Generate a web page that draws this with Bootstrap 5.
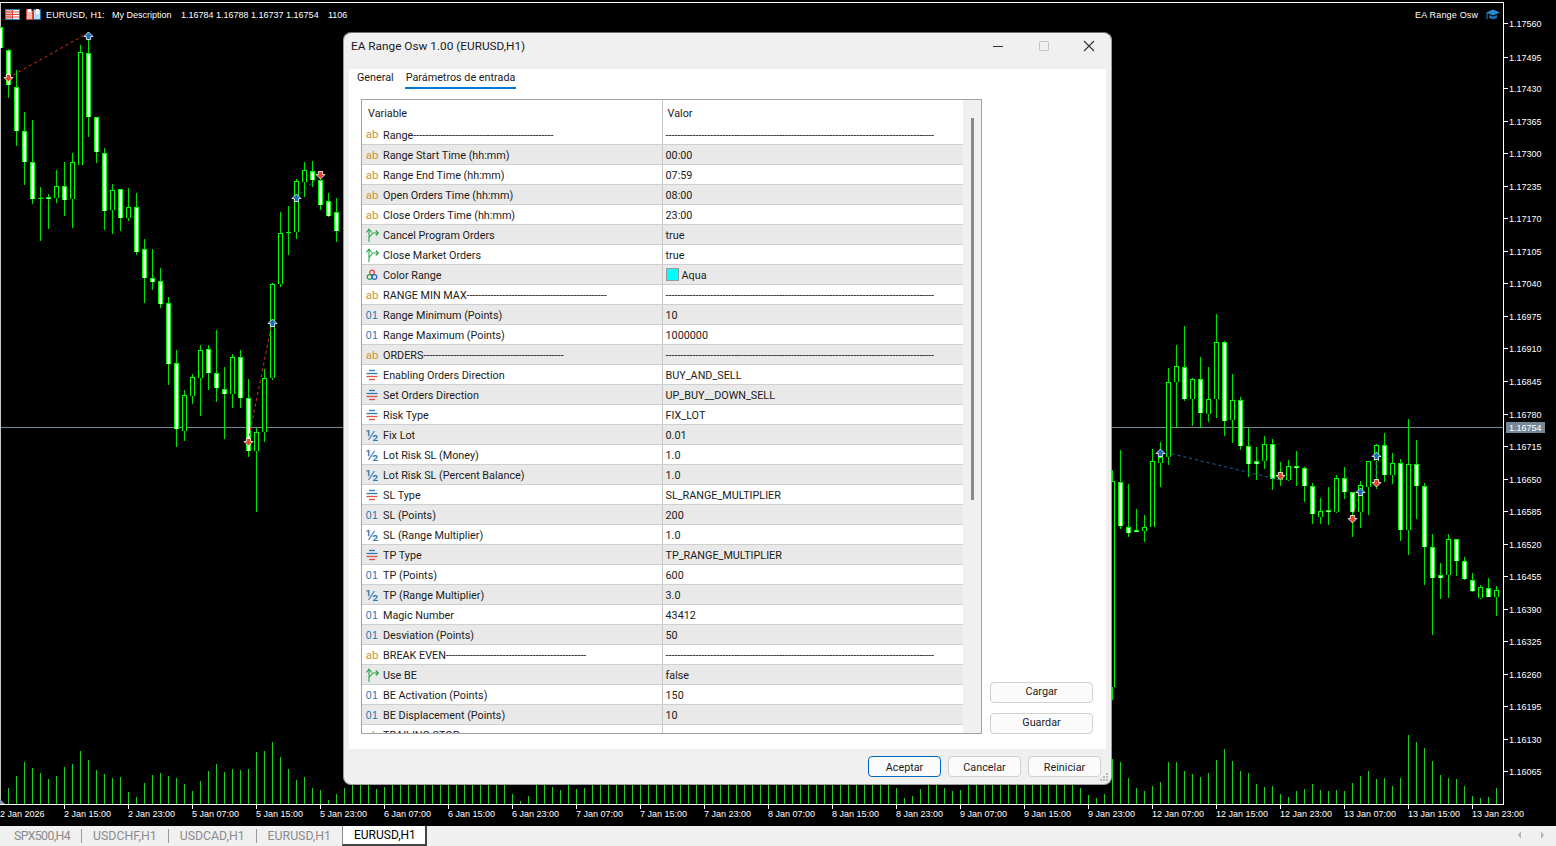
<!DOCTYPE html>
<html lang="es">
<head>
<meta charset="UTF-8">
<title>EA Range Osw 1.00 (EURUSD,H1)</title>
<link href="https://cdn.jsdelivr.net/npm/bootstrap@5.3.0/dist/css/bootstrap.min.css" rel="stylesheet">
<style>
    html, body { height: 100%; overflow: hidden; background: #000; }
    .term { height: 846px; font-family: "Roboto", "Liberation Sans", sans-serif; font-size: 10.8px; }
    .chart-pane { height: 826px; background: #000; }
    .chart-svg { display: block; }
    .chart-svg text { font-family: "Liberation Sans", sans-serif; font-size: 9px; fill: #fff; }
    .chart-svg text.hdr-text { letter-spacing: .02em; }
    .tab-strip { height: 20px; background: #f0f0f0; padding-left: 3px; }
    .sym-tab { color: #8b8b8b; font-size: 12.3px; line-height: 20px; padding: 0 11px; }
    .sym-tab-tight { letter-spacing: -.6px; }
    .sym-sep { width: 1px; height: 14px; background: #9a9a9a; }
    .sym-on { color: #000; background: #fff; border: 1px solid #8d8d8d; border-right: 2px solid #444; border-bottom: 2px solid #444; padding: 0 9px 0 11px; height: 21px; line-height: 18px; margin-top: -1px; font-size: 12px; }
    .strip-arrows { right: 10px; top: 831px; }

    .ea-dialog { left: 343px; top: 32px; width: 769px; height: 753px; background: #f0f0f0; border: 1px solid #9c9c9c; border-top-color: #6e6e6e; border-radius: 8px; color: #1b1b1b; }
    .dlg-title { height: 36px; padding: 0 0 9px 7px; font-size: 11.8px; }
    .dlg-caption { margin-top: 2px; }
    .win-btns { margin-right: -1px; }
    .win-btn { width: 45.5px; display: flex; justify-content: center; }
    .dlg-body { background: #fff; margin: 0 5px; height: 680px; }
    .tab-row { height: 30px; padding: 0 7px; gap: 10px; }
    .cfg-tab { line-height: 18px; padding: 0 1px; color: #1b1b1b; }
    .cfg-tab-on { border-bottom: 2px solid #0078d4; height: 20px; }
    .grid-row { padding: 0 12px 15px 12px; }
    .grid-box { width: 621px; height: 635px; border: 1px solid #a0a0aa; overflow: hidden; }
    .scroll-rail { width: 18px; background: #f0f0f0; }
    .scroll-thumb { width: 3px; height: 382px; margin: 18px auto 0; background: #8a8a8a; }
    .prm-grid { width: 601px; table-layout: fixed; margin: 0; font-size: 10.8px; --bs-table-bg: transparent; }
    .prm-grid th, .prm-grid td { height: 20px; padding: 3px 0 0 3px; line-height: 16px; font-weight: 400; white-space: nowrap; overflow: hidden; border: 0; border-bottom: 1px solid #cfcfcf; color: #1b1b1b; vertical-align: middle; }
    .prm-grid th { height: 25px; border-bottom: 0; padding-left: 6px; }
    .prm-grid td:first-child { padding-left: 3px; }
    .prm-grid td + td, .prm-grid th + th { border-left: 1px solid #c8c8c8; }
    .prm-grid th + th { padding-left: 5px; }
    .prm-grid tbody tr:nth-child(even) td { background: #e9e9e9; }
    .var-col { width: 300px; }
    .ico { display: inline-block; width: 14px; margin-right: 4px; margin-top: -3px; text-align: center; vertical-align: middle; line-height: 14px; }
    .ico-ab { color: #c8953b; font-size: 11.5px; }
    .ico-int { color: #1f74b5; font-family: "Liberation Sans", sans-serif; font-size: 10.5px; letter-spacing: .4px; }
    .ico-dbl { color: #2a7cb8; font-size: 17px; }
    .swatch { display: inline-block; width: 13px; height: 13px; background: #0ff; border: 1px solid #9a9a9a; margin-right: 3px; vertical-align: -2px; }
    .side-col { width: 103px; margin-left: 8px; gap: 10px; }
    .win-btn-std { --bs-btn-padding-y: 0; --bs-btn-padding-x: 0; --bs-btn-font-size: 10.8px; --bs-btn-border-radius: 4px; --bs-btn-bg: #fbfbfb; --bs-btn-border-color: #d0d0d0; --bs-btn-color: #1b1b1b; height: 21px; line-height: 18px; }
    .win-btn-main { --bs-btn-border-color: #0067c0; }
    .dlg-foot { height: 36px; padding: 7px 10px 0 0; gap: 7px; }
    .dlg-foot .win-btn-std { width: 73px; padding-top: 2px; }
    .grip { right: 2px; bottom: 2px; }
</style>
</head>
<body>
<svg width="0" height="0" class="position-absolute">
    <symbol id="i-bool" viewBox="0 0 14 14"><g fill="none" stroke="#2aa84a" stroke-width="1.1"><path d="M4 14V1.5M1.2 4.5 4 1.2l2.8 3.3"/><path d="M4 9.5 8 5h5.4M10.8 2.5 13.4 5l-2.6 2.5"/></g></symbol>
    <symbol id="i-enum" viewBox="0 0 14 14"><g stroke-width="1.3"><path d="M4 2.5h6" stroke="#2a7cb8"/><path d="M1.5 5.5h11" stroke="#2a7cb8"/><path d="M1.5 8.5h11" stroke="#e0503c"/><path d="M4 11.5h6" stroke="#e0503c"/></g></symbol>
    <symbol id="i-color" viewBox="0 0 14 14"><g fill="none" stroke-width="1.3"><circle cx="7" cy="4.5" r="2.3" stroke="#d8483c"/><circle cx="4.5" cy="9" r="2.3" stroke="#2f9e55"/><circle cx="9.5" cy="9" r="2.3" stroke="#2a6cb8"/></g></symbol>
</svg>

<div class="term d-flex flex-column position-relative">
    <div class="chart-pane position-relative">
        <svg id="chart" class="chart-svg" width="1556" height="826"></svg>
    </div>

    <div class="tab-strip d-flex align-items-center">
        <span class="sym-tab sym-tab-tight">SPX500,H4</span><span class="sym-sep"></span>
        <span class="sym-tab">USDCHF,H1</span><span class="sym-sep"></span>
        <span class="sym-tab">USDCAD,H1</span><span class="sym-sep"></span>
        <span class="sym-tab">EURUSD,H1</span>
        <span class="sym-on">EURUSD,H1</span>
    </div>
    <svg class="strip-arrows position-absolute" width="28" height="8"><path d="M3 0v8L0 4z" fill="#b5b5b5"/><path d="M23 0v8l3-4z" fill="#b5b5b5"/></svg>

    <div class="ea-dialog position-absolute d-flex flex-column">
        <div class="dlg-title d-flex align-items-center justify-content-between">
            <span class="dlg-caption">EA Range Osw 1.00 (EURUSD,H1)</span>
            <div class="win-btns d-flex align-items-center">
                <span class="win-btn"><svg width="12" height="12"><path d="M1 6.5h10" stroke="#333" stroke-width="1"/></svg></span>
                <span class="win-btn"><svg width="12" height="12"><rect x="1.5" y="1.5" width="9" height="9" fill="none" stroke="#c4c4c4" rx="1"/></svg></span>
                <span class="win-btn"><svg width="12" height="12"><path d="M1 1l10 10M11 1 1 11" stroke="#333" stroke-width="1.1"/></svg></span>
            </div>
        </div>

        <div class="dlg-body d-flex flex-column">
            <div class="tab-row d-flex align-items-start">
                <span class="cfg-tab">General</span>
                <span class="cfg-tab cfg-tab-on">Parámetros de entrada</span>
            </div>
            <div class="grid-row d-flex flex-grow-1">
                <div class="grid-box d-flex">
                    <table class="prm-grid table">
                        <colgroup><col class="var-col"><col></colgroup>
                        <thead><tr><th>Variable</th><th>Valor</th></tr></thead>
                        <tbody id="rows"></tbody>
                    </table>
                    <div class="scroll-rail"><div class="scroll-thumb"></div></div>
                </div>
                <div class="side-col d-flex flex-column justify-content-end">
                    <button class="btn win-btn-std">Cargar</button>
                    <button class="btn win-btn-std">Guardar</button>
                </div>
            </div>
        </div>

        <div class="dlg-foot d-flex justify-content-end">
            <button class="btn win-btn-std win-btn-main">Aceptar</button>
            <button class="btn win-btn-std">Cancelar</button>
            <button class="btn win-btn-std">Reiniciar</button>
        </div>
        <svg class="grip position-absolute" width="9" height="9"><g fill="#b9b9b9"><rect x="6" width="2" height="2"/><rect x="3" y="3" width="2" height="2"/><rect x="6" y="3" width="2" height="2"/><rect y="6" width="2" height="2"/><rect x="3" y="6" width="2" height="2"/><rect x="6" y="6" width="2" height="2"/></g></svg>
    </div>
</div>

<script src="https://cdn.jsdelivr.net/npm/bootstrap@5.3.0/dist/js/bootstrap.bundle.min.js"></script>
<script>
    // parametros del EA: [tipo, nombre, valor]
    const dash = '-'.repeat(90);
    const sep = '-'.repeat(47);
    const params = [
        ['ab', 'Range' + sep, dash],
        ['ab', 'Range Start Time (hh:mm)', '00:00'],
        ['ab', 'Range End Time (hh:mm)', '07:59'],
        ['ab', 'Open Orders Time (hh:mm)', '08:00'],
        ['ab', 'Close Orders Time (hh:mm)', '23:00'],
        ['bool', 'Cancel Program Orders', 'true'],
        ['bool', 'Close Market Orders', 'true'],
        ['color', 'Color Range', 'Aqua'],
        ['ab', 'RANGE MIN MAX' + sep, dash],
        ['int', 'Range Minimum (Points)', '10'],
        ['int', 'Range Maximum (Points)', '1000000'],
        ['ab', 'ORDERS' + sep, dash],
        ['enum', 'Enabling Orders Direction', 'BUY_AND_SELL'],
        ['enum', 'Set Orders Direction', 'UP_BUY__DOWN_SELL'],
        ['enum', 'Risk Type', 'FIX_LOT'],
        ['dbl', 'Fix Lot', '0.01'],
        ['dbl', 'Lot Risk SL (Money)', '1.0'],
        ['dbl', 'Lot Risk SL (Percent Balance)', '1.0'],
        ['enum', 'SL Type', 'SL_RANGE_MULTIPLIER'],
        ['int', 'SL (Points)', '200'],
        ['dbl', 'SL (Range Multiplier)', '1.0'],
        ['enum', 'TP Type', 'TP_RANGE_MULTIPLIER'],
        ['int', 'TP (Points)', '600'],
        ['dbl', 'TP (Range Multiplier)', '3.0'],
        ['int', 'Magic Number', '43412'],
        ['int', 'Desviation (Points)', '50'],
        ['ab', 'BREAK EVEN' + sep, dash],
        ['bool', 'Use BE', 'false'],
        ['int', 'BE Activation (Points)', '150'],
        ['int', 'BE Displacement (Points)', '10'],
        ['ab', 'TRAILING STOP' + sep, dash]
    ];
    const icons = {
        ab: '<span class="ico ico-ab">ab</span>',
        int: '<span class="ico ico-int">01</span>',
        dbl: '<span class="ico ico-dbl">½</span>',
        bool: '<svg class="ico" height="14"><use href="#i-bool"/></svg>',
        enum: '<svg class="ico" height="14"><use href="#i-enum"/></svg>',
        color: '<svg class="ico" height="14"><use href="#i-color"/></svg>'
    };
    document.getElementById('rows').innerHTML = params.map(([t, n, v]) => {
        const val = t === 'color' ? '<span class="swatch"></span>' + v : v;
        return `<tr><td>${icons[t]}${n}</td><td>${val}</td></tr>`;
    }).join('');

    // velas: [x, maximo, minimo, cuerpo arriba, cuerpo abajo, blanca]
    const candles = [
        [0,27,48,27,48,1],[8,49,98,50,85,1],[16,70,146,87,131,1],[24,112,185,131,162,1],[32,120,204,162,199,1],
        [40,187,241,198,199,1],[48,194,229,197,199,1],[56,170,203,186,198,0],[64,162,216,186,200,1],[72,153,228,162,199,0],
        [80,45,165,52,165,0],[88,35,137,53,117,1],[96,117,163,117,152,1],[104,148,230,153,211,1],[112,184,234,190,210,0],
        [120,189,231,189,218,1],[128,188,221,207,218,0],[136,193,255,207,252,1],[144,239,303,249,278,1],[152,249,290,278,282,1],
        [160,268,308,281,304,1],[168,297,385,303,364,1],[176,350,447,363,429,1],[184,390,441,395,431,0],[192,374,404,377,396,0],
        [200,345,416,350,378,0],[208,345,390,349,373,1],[216,330,402,373,388,1],[224,367,439,389,394,1],[232,354,408,357,394,0],
        [240,350,408,357,398,1],[248,379,457,398,451,1],[256,428,512,432,451,0],[264,369,442,378,432,0],[272,283,380,284,378,0],
        [280,212,287,233,284,0],[288,206,255,232,233,1],[296,179,239,181,232,0],[304,162,197,170,182,0],[312,161,187,171,180,1],
        [320,172,210,180,205,1],[328,193,217,201,216,1],[336,198,242,212,231,1],
        [1112,470,700,481,687,0],[1120,450,529,482,526,1],[1128,484,537,527,533,1],[1136,509,532,530,532,1],[1144,515,542,527,531,0],
        [1152,449,527,461,527,0],[1160,442,487,457,463,0],[1168,368,465,382,457,0],[1176,345,428,366,382,0],[1184,326,401,367,399,1],
        [1192,378,426,379,399,0],[1200,357,428,379,413,1],[1208,367,422,399,414,0],[1216,314,418,342,399,0],[1224,341,436,342,421,1],
        [1232,374,443,400,420,0],[1240,397,450,400,446,1],[1248,428,477,446,464,1],[1256,447,480,461,464,1],[1264,436,469,444,461,0],
        [1272,439,490,444,479,1],[1280,462,486,473,480,0],[1288,460,481,466,480,0],[1296,451,486,466,468,1],[1304,467,502,468,486,1],
        [1312,483,524,486,514,1],[1320,498,524,511,517,0],[1328,487,525,510,512,1],[1336,475,513,478,512,0],[1344,467,499,478,492,1],
        [1352,492,537,492,512,1],[1360,481,528,485,512,0],[1368,461,515,461,487,0],[1376,444,489,445,461,0],[1384,433,482,445,475,1],
        [1392,453,484,463,475,0],[1400,459,541,463,530,1],[1408,419,555,464,530,0],[1416,440,519,464,486,1],[1424,483,585,486,547,1],
        [1432,534,635,547,578,1],[1440,563,599,575,578,1],[1448,534,598,539,575,0],[1456,539,576,539,561,1],[1464,557,580,561,579,1],
        [1472,573,592,580,591,1],[1480,585,599,587,598,0],[1488,578,597,588,597,1],[1496,586,616,590,597,0]
    ];

    // volumen: altura superior de cada barra, desde x=8, cada 8 px
    const volTops = [788,776,762,768,773,779,776,767,764,751,760,770,774,778,777,792,797,783,775,773,776,778,784,791,781,771,764,772,769,770,769,752,751,742,757,769,780,777,788,790,800,794,788];
    const volShort = {376:789,384:787,512:794,520:801,528:796,552:787,560:790,576:789,584:788,896:788,904:798,912:796,920:789,944:788,952:791,960:790,1080:788,1088:795,1096:798,1104:794};
    const volRight = [759,762,778,788,791,786,782,762,762,771,774,777,773,760,749,761,771,773,784,787,786,794,797,791,789,784,790,791,790,791,783,776,771,779,778,786,778,735,742,748,761,775,778,779,786,796,798,797,788];

    const prices = [[1.17560,23],[1.17495,57],[1.17430,88],[1.17365,121],[1.17300,153],[1.17235,186],[1.17170,218],[1.17105,251],[1.17040,283],[1.16975,316],[1.16910,348],[1.16845,381],[1.16780,414],[1.16715,446],[1.16650,479],[1.16585,511],[1.16520,544],[1.16455,576],[1.16390,609],[1.16325,641],[1.16260,674],[1.16195,706],[1.16130,739],[1.16065,771]];
    const times = ['2 Jan 2026','2 Jan 15:00','2 Jan 23:00','5 Jan 07:00','5 Jan 15:00','5 Jan 23:00','6 Jan 07:00','6 Jan 15:00','6 Jan 23:00','7 Jan 07:00','7 Jan 15:00','7 Jan 23:00','8 Jan 07:00','8 Jan 15:00','8 Jan 23:00','9 Jan 07:00','9 Jan 15:00','9 Jan 23:00','12 Jan 07:00','12 Jan 15:00','12 Jan 23:00','13 Jan 07:00','13 Jan 15:00','13 Jan 23:00'];

    let s = '';
    const vline = (x, y1, y2, c) => `<rect x="${x}" y="${y1}" width="1" height="${y2 - y1}" fill="${c}"/>`;

    // marco del grafico
    s += vline(0, 2, 804, '#c8c8c8') + vline(1503, 2, 805, '#fff');
    s += '<rect y="2" width="1504" height="1" fill="#fff"/><rect y="804" width="1504" height="1" fill="#fff"/>';
    s += '<path d="M0 799l5 5H0z" fill="#8899aa"/>';

    // volumen
    const volColor = '#1fcc1f';
    volTops.forEach((t, i) => { s += vline(8 + i * 8, t, 804, volColor); });
    for (let x = 352; x < 1112; x += 8) s += vline(x, volShort[x] || 785, 804, volColor);
    volRight.forEach((t, i) => { s += vline(1112 + i * 8, t, 804, volColor); });

    // linea de precio
    s += '<rect x="1" y="427" width="1502" height="1" fill="#778899"/>';

    // velas
    candles.forEach(([x, hi, lo, top, bot, white]) => {
        s += vline(x, hi, lo, '#00e000');
        s += `<rect x="${x - 2}" y="${top}" width="5" height="${Math.max(bot - top, 1)}" fill="#0f0"/>`;
        if (bot - top > 1) s += `<rect x="${x - 1}" y="${top + 1}" width="3" height="${bot - top - 1}" fill="${white ? '#fff' : '#000'}"/>`;
    });

    // lineas de operaciones
    const dashed = (x1, y1, x2, y2, c) => `<line x1="${x1}" y1="${y1}" x2="${x2}" y2="${y2}" stroke="${c}" stroke-dasharray="3 3"/>`;
    s += dashed(8, 78, 88, 33, '#e0301e') + dashed(248, 442, 272, 323, '#e0301e') + dashed(1352, 519, 1360, 490, '#e0301e');
    s += dashed(296, 198, 320, 175, '#1464b4') + dashed(1160, 451, 1280, 480, '#1464b4') + dashed(1376, 456, 1376, 483, '#1464b4');

    // flechas
    const up = (x, y) => `<path transform="translate(${x + .5} ${y})" d="M0-4 4.5 .5H2.2V3.5H-2.2V.5H-4.5z" fill="#1a6cb4" stroke="#fff" stroke-width=".8"/>`;
    const down = (x, y) => `<path transform="translate(${x + .5} ${y})" d="M0 4 4.5-.5H2.2V-3.5H-2.2V-.5H-4.5z" fill="#e4452c" stroke="#fff" stroke-width=".8"/>`;
    [[88,36],[296,198],[272,323],[1160,453],[1360,492],[1376,456]].forEach(p => { s += up(p[0], p[1]); });
    [[8,78],[320,175],[248,442],[1280,476],[1352,519],[1376,483]].forEach(p => { s += down(p[0], p[1]); });

    // escala de precios
    prices.forEach(([p, y]) => {
        s += `<rect x="1504" y="${y}" width="4" height="1" fill="#fff"/><text x="1509" y="${y + 4}">${p.toFixed(5)}</text>`;
    });
    s += '<rect x="1506" y="422" width="39" height="11" fill="#778899"/><text x="1509" y="431">1.16754</text>';

    // escala de tiempo
    times.forEach((t, i) => {
        if (i) s += vline(i * 64, 805, 809, '#fff');
        s += `<text x="${i ? i * 64 : 0}" y="817">${t}</text>`;
    });

    // cabecera
    s += '<rect x="5.5" y="9.5" width="14" height="10" fill="#fff" stroke="#2a7cb8"/><path d="M6 10h6v9H6z" fill="#f0b0a8"/><path d="M6 12h13M6 14.5h13M6 17h13" stroke="#d84a3a"/><path d="M12.5 10v9" stroke="#d84a3a"/>';
    s += '<path d="M26.5 9.5h5l1 2v8h-6z" fill="#f4b8b0" stroke="#d84a3a"/><path d="M33.5 9.5h7v10h-7z" fill="#bcdcf4" stroke="#1a6cb4"/><rect x="28" y="9" width="3" height="3" fill="#fff"/><rect x="36" y="9" width="3" height="5" fill="#fff"/>';
    s += '<text class="hdr-text" x="46" y="18">EURUSD, H1:</text><text x="112" y="18">My Description</text><text x="181" y="18">1.16784 1.16788 1.16737 1.16754</text><text x="328" y="18">1106</text>';
    s += '<text class="hdr-text" x="1415" y="18">EA Range Osw</text>';
    s += '<path d="M1486 12.5l7-3 7 3-7 3z" fill="#2a8ad0"/><path d="M1489 15v3c2 1.5 6 1.5 8 0v-3l-4 1.6z" fill="#1a6cb4"/><path d="M1487 13v6" stroke="#2a8ad0"/>';

    document.getElementById('chart').innerHTML = s;
</script>
</body>
</html>
